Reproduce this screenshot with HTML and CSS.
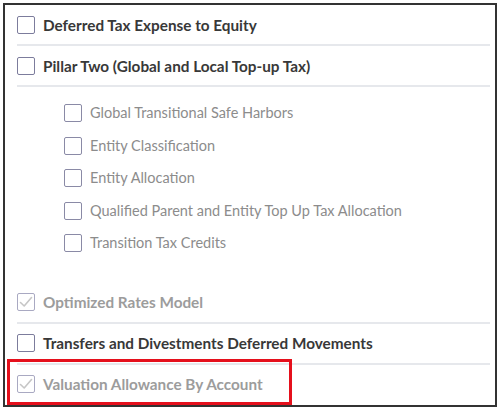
FILE: index.html
```html
<!DOCTYPE html>
<html>
<head>
<meta charset="utf-8">
<link rel="stylesheet" href="styles.css">
</head>
<body>
<div class="frame">
  <ul class="list">
    <li class="row">
      <span class="box"></span>
      <span class="label">Deferred Tax Expense to Equity</span>
    </li>
    <li class="row">
      <span class="box"></span>
      <span class="label">Pillar Two (Global and Local Top-up Tax)</span>
    </li>
    <li class="nested">
      <div class="sub"><span class="box"></span><span class="sublabel">Global Transitional Safe Harbors</span></div>
      <div class="sub"><span class="box"></span><span class="sublabel">Entity Classification</span></div>
      <div class="sub"><span class="box"></span><span class="sublabel">Entity Allocation</span></div>
      <div class="sub"><span class="box"></span><span class="sublabel">Qualified Parent and Entity Top Up Tax Allocation</span></div>
      <div class="sub"><span class="box"></span><span class="sublabel">Transition Tax Credits</span></div>
    </li>
    <li class="row row-plain disabled">
      <span class="box checked"><svg viewBox="0 0 18 18" width="18" height="18"><path d="M3.5 9.5 L7.2 13 L14.5 4.5" fill="none" stroke="#c6c6c6" stroke-width="1.6" stroke-linecap="round" stroke-linejoin="round"/></svg></span>
      <span class="label">Optimized Rates Model</span>
    </li>
    <li class="row">
      <span class="box"></span>
      <span class="label">Transfers and Divestments Deferred Movements</span>
    </li>
    <li class="row disabled highlighted">
      <span class="box checked"><svg viewBox="0 0 18 18" width="18" height="18"><path d="M3.5 9.5 L7.2 13 L14.5 4.5" fill="none" stroke="#c6c6c6" stroke-width="1.6" stroke-linecap="round" stroke-linejoin="round"/></svg></span>
      <span class="label">Valuation Allowance By Account</span>
      <span class="callout"></span>
    </li>
  </ul>
</div>
</body>
</html>
```

FILE: styles.css
```css
html, body {
  margin: 0;
  padding: 0;
  background: #ffffff;
}
body {
  font-family: Lato, "Liberation Sans", sans-serif;
}
.frame {
  margin: 3px 0 0 3px;
  width: 494px;
  height: 404px;
  box-sizing: border-box;
  border: 2px solid #333333;
  overflow: hidden;
}
.list {
  list-style: none;
  margin: -2px 0 0 0;
  padding: 0 5px 0 12px;
}
.row {
  position: relative;
  display: flex;
  align-items: center;
  gap: 8px;
  height: 41px;
  box-sizing: border-box;
  border-top: 2px solid #e6e8ec;
}
.row-plain {
  border-top-color: transparent;
}
.box {
  flex: none;
  width: 18px;
  height: 18px;
  box-sizing: border-box;
  border: 1.5px solid #7c7c9c;
  border-radius: 2px;
  background: #fff;
  position: relative;
}
.box svg {
  position: absolute;
  left: -1.5px;
  top: -1.5px;
}
.box.checked {
  border-color: #a9a9c2;
}
.label {
  font-weight: 700;
  font-size: 15.3px;
  color: #383838;
  line-height: 18px;
}
.disabled .label {
  color: #9c9c9c;
}
.nested {
  border-top: 2px solid #e6e8ec;
  padding: 10px 0 21px 47px;
  display: flex;
  flex-direction: column;
}
.sub {
  display: flex;
  align-items: center;
  gap: 8px;
  height: 32.5px;
}
.sub .box {
  border-color: #8a8aa6;
}
.sublabel {
  font-size: 14.5px;
  color: #8c8c8c;
  line-height: 18px;
}
.callout {
  position: absolute;
  left: -10px;
  top: -6px;
  width: 285px;
  height: 46px;
  box-sizing: border-box;
  border: 3px solid #e5101c;
  pointer-events: none;
}
```
